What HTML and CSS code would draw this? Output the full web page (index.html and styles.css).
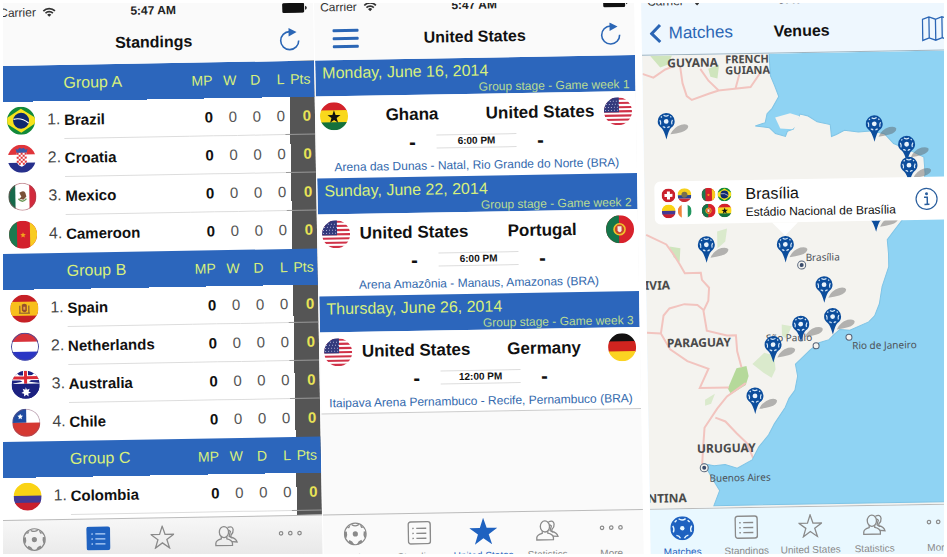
FILE: index.html
```html
<!DOCTYPE html>
<html lang="en">
<head>
    <meta charset="UTF-8">
    <meta name="viewport" content="width=device-width, initial-scale=1.0">
    <title>World Cup 2014</title>
    <link rel="stylesheet" href="styles.css">
</head>
<body>
    <!-- Icons and flags -->
    <svg class="sprite" aria-hidden="true">
        <symbol id="wifi" viewBox="0 0 14 10">
            <path d="M1.2 3.8a8.2 8.2 0 0 1 11.6 0M3.3 6a5.2 5.2 0 0 1 7.4 0" fill="none" stroke="currentColor" stroke-width="1.7"/>
            <path d="M7 9.6L4.9 7.5a3 3 0 0 1 4.2 0z" fill="currentColor"/>
        </symbol>
        <symbol id="battery" viewBox="0 0 25 10">
            <rect width="22" height="10" rx="1.5" fill="currentColor"/>
            <path d="M23 3v4q1.6-.6 1.6-2T23 3z" fill="currentColor"/>
        </symbol>
        <symbol id="refresh" viewBox="0 0 24 24">
            <path d="M12 3.600a9 9 0 1 0 9 9" fill="none" stroke="currentColor" stroke-width="1.6"/>
            <path d="M11 0l8 4.200-8 4.300z" fill="currentColor"/>
        </symbol>
        <symbol id="ball" viewBox="0 0 24 24">
            <circle cx="12" cy="12" r="10.8" fill="none" stroke="currentColor" stroke-width="1.200"/>
            <path d="M8 1.600q4 3.200 8 0l-.5 2q-3.500 1.800-7 0zM1.200 10l2.300-.5q1 3.500-.5 6.500l-1.200-.3zM22.800 10l-2.300-.5q-1 3.500.5 6.500l1.200-.3zM5 20.200l1-2.200q3.200 1 4.500 4.300l-1.500.3zM19 20.200L18 18q-3.200 1-4.500 4.300l1.500.3zM3.500 5.800l2.500.4L7.500 3zM20.500 5.800l-2.500.4L16.500 3z" fill="currentColor"/>
            <circle cx="12" cy="12" r="2.600" fill="currentColor"/>
        </symbol>
        <symbol id="ball-full" viewBox="0 0 24 24">
            <circle cx="12" cy="12" r="12" fill="currentColor"/>
            <g fill="none" stroke="#e9f8ff" stroke-width="1.400">
                <path d="M8.500 2.500q3.500 2.600 7 0M2.500 9.500q2 3 .5 6.500M21.500 9.500q-2 3-.5 6.500M6 19q3 .5 4 3M18 19q-3 .5-4 3M4.500 6l2-2M19.500 6l-2-2"/>
            </g>
            <circle cx="12" cy="12" r="2.200" fill="#e9f8ff"/>
        </symbol>
        <symbol id="list" viewBox="0 0 24 24">
            <rect x="1" y="1" width="22" height="22" rx="2.500" fill="none" stroke="currentColor" stroke-width="1.400"/>
            <path d="M9 7.500h10M9 12.500h10M9 17.500h10M5 7.500h1.500M5 12.500h1.500M5 17.500h1.500" stroke="currentColor" stroke-width="1.400"/>
        </symbol>
        <symbol id="list-full" viewBox="0 0 24 24">
            <rect width="24" height="24" rx="3" fill="currentColor"/>
            <path d="M9 7.500h10M9 12.500h10M9 17.500h10M5 7.500h1.500M5 12.500h1.500M5 17.500h1.500" stroke="#b9d5fa" stroke-width="1.300"/>
        </symbol>
        <symbol id="star" viewBox="0 0 28 28">
            <path d="M14 1l3.200 9.600 10.100.1-8.100 6 3 9.700-8.200-5.900-8.200 5.900 3-9.700-8.100-6 10.100-.1z" fill="none" stroke="currentColor" stroke-width="1.500"/>
        </symbol>
        <symbol id="star-full" viewBox="0 0 28 28">
            <path d="M14 0l3.400 10.200L28 10.300l-8.600 6.300 3.200 10.200L14 20.600l-8.600 6.200 3.200-10.200L0 10.300l10.600-.1z" fill="currentColor"/>
        </symbol>
        <symbol id="people" viewBox="0 0 26 24">
            <g fill="none" stroke="currentColor" stroke-width="1.400">
                <ellipse cx="10.500" cy="7.500" rx="5" ry="6"/>
                <path d="M7.500 12.500v2.300Q2 16 1.500 19.500V22h18v-2.500q-.5-3.500-6-4.700v-2.300"/>
                <path d="M14.500 2.500Q20 .5 20.500 5q.3 3.500-2.500 6v2q5.500 1.500 6.500 5.500l-5.500-.5M15.500 5.500l2 1.500-1.500 5 3 2"/>
            </g>
        </symbol>
        <symbol id="dots" viewBox="0 0 26 24">
            <g fill="none" stroke="currentColor" stroke-width="1.300">
                <circle cx="3" cy="10" r="1.900"/>
                <circle cx="13" cy="10" r="1.900"/>
                <circle cx="23" cy="10" r="1.900"/>
            </g>
        </symbol>
        <symbol id="map-icon" viewBox="0 0 28 26">
            <path d="M1 3.500L7.500 1 14 3.500 20.500 1 27 3.500v21L20.500 22 14 24.500 7.500 22 1 24.500zM7.500 1v21M14 3.500v21M20.500 1v21" fill="none" stroke="currentColor" stroke-width="1.300"/>
        </symbol>
        <symbol id="pin" viewBox="0 0 40 32">
            <path d="M13 22q3-7 11-9.500 6-1 7 1.500 0 4-7 6-5 1.500-11 2z" fill="#555" opacity=".42"/>
            <path d="M9 .5a8.500 8.500 0 0 1 8.500 8.500q0 4-3.700 6.500-2.300 2-4.800 11.500-2.500-9.500-4.800-11.500Q.5 13 .5 9A8.500 8.500 0 0 1 9 .5z" fill="#0c4d9c"/>
            <path d="M6.500 2.800q2.500 1.800 5 0M2.700 7.500q1.300 2 .6 4.500M15.300 7.500q-1.300 2-.6 4.500M5.500 14.500q1.500-.5 2.300 1M12.500 14.500q-1.500-.5-2.300 1M3.800 5l1-1M14.200 5l-1-1" fill="none" stroke="#d6e8f9" stroke-width="1.200"/>
            <circle cx="9" cy="9" r="2.400" fill="#e9f3fc"/>
        </symbol>

        <symbol id="br" viewBox="0 0 28 28">
            <path fill="#12893a" d="M0 0h28v28H0z"/>
            <path fill="#f6e21c" d="M14 2l14 9v6l-14 9L0 17v-6z"/>
            <circle cx="14" cy="14" r="8" fill="#10286e"/>
            <path d="M6.500 12.500q8-2 15 4" fill="none" stroke="#fff" stroke-width="1.200"/>
        </symbol>
        <symbol id="hr" viewBox="0 0 28 28">
            <path fill="#e0343a" d="M0 0h28v10H0z"/>
            <path fill="#fff" d="M0 10h28v8H0z"/>
            <path fill="#27308c" d="M0 18h28v10H0z"/>
            <path fill="#fff" d="M9 8h10v9q-1 4-5 5-4-1-5-5z"/>
            <path fill="#e0343a" d="M9 8h2v2H9zM13 8h2v2h-2zM17 8h2v2h-2zM11 10h2v2h-2zM15 10h2v2h-2zM9 12h2v2H9zM13 12h2v2h-2zM17 12h2v2h-2zM11 14h2v2h-2zM15 14h2v2h-2zM9 16h2v2H9zM13 16h2v2h-2zM17 16h2v2h-2zM11 18h2v2h-2zM15 18h2v2h-2z"/>
            <path fill="#3b5aa8" d="M8 4l2 1 2-2 2 1 2-1 2 2 2-1-1 4H9z"/>
        </symbol>
        <symbol id="mx" viewBox="0 0 28 28">
            <path fill="#fff" d="M0 0h28v28H0z"/>
            <path fill="#17694a" d="M0 0h7v28H0z"/>
            <path fill="#d22a3c" d="M21 0h7v28h-7z"/>
            <path d="M10 16q4 5 8 0" fill="none" stroke="#6e9a5a" stroke-width="1.500"/>
            <path fill="#7a5238" d="M11 10q4-3 6 0l1 4-3 3-4-1 2-2z"/>
            <circle cx="14" cy="14" r="13.500" fill="none" stroke="#a04a55" stroke-opacity=".6"/>
        </symbol>
        <symbol id="cm" viewBox="0 0 28 28">
            <path fill="#d3202c" d="M0 0h28v28H0z"/>
            <path fill="#1b7a50" d="M0 0h8v28H0z"/>
            <path fill="#f8cb22" d="M21 0h7v28h-7z"/>
            <path fill="#f3a21d" d="M14 11.500l.8 1.800 2 .2-1.500 1.400.4 2-1.700-1-1.700 1 .4-2-1.500-1.400 2-.2z"/>
        </symbol>
        <symbol id="es" viewBox="0 0 28 28">
            <path fill="#c62026" d="M0 0h28v28H0z"/>
            <path fill="#f8bf1c" d="M0 7h28v14H0z"/>
            <path d="M9.500 18v-7M18.500 18v-7M8.500 18.500h11" stroke="#8a5b34" stroke-width="1.200"/>
            <path fill="#96502c" d="M11.500 10q2.500-2 5 0v6q-2.500 3-5 0z"/>
            <path fill="#e6a04a" d="M13 12h2v3h-2z"/>
        </symbol>
        <symbol id="nl" viewBox="0 0 28 28">
            <path fill="#fff" d="M0 0h28v28H0z"/>
            <path fill="#d8323a" d="M0 0h28v9H0z"/>
            <path fill="#2a35c4" d="M0 19h28v9H0z"/>
            <circle cx="14" cy="14" r="13.500" fill="none" stroke="#4a4f9e"/>
        </symbol>
        <symbol id="au" viewBox="0 0 28 28">
            <path fill="#1c2180" d="M0 0h28v28H0z"/>
            <path d="M0 0l14 12L28 0M14 12L2 14M14 12l14 2" stroke="#fff" stroke-width="3" fill="none"/>
            <path d="M14 0v13M0 7h28" stroke="#fff" stroke-width="5"/>
            <path d="M14 0v13M0 7h28" stroke="#dc2a36" stroke-width="3"/>
            <path fill="#1c2180" d="M0 13h28v15H0z"/>
            <path fill="#fff" d="M14 16.500l1.200 2.600 2.700-1-1.100 2.700 2.400 1.400-2.700.8.300 2.800-2.300-1.600-2.300 1.600.1-2.800-2.700-.8 2.400-1.400-1.100-2.700 2.700 1z"/>
        </symbol>
        <symbol id="cl" viewBox="0 0 28 28">
            <path fill="#fff" d="M0 0h28v28H0z"/>
            <path fill="#1f4ba0" d="M0 0h14v14H0z"/>
            <path fill="#d53832" d="M0 14h28v14H0z"/>
            <path fill="#fff" d="M8 5l.8 1.800 2 .2-1.500 1.400.4 2-1.700-1-1.700 1 .4-2L5.200 7l2-.2z"/>
            <circle cx="14" cy="14" r="13.500" fill="none" stroke="#8a5a76" stroke-opacity=".5"/>
        </symbol>
        <symbol id="co" viewBox="0 0 28 28">
            <path fill="#fad314" d="M0 0h28v14H0z"/>
            <path fill="#433a94" d="M0 13h28v8H0z"/>
            <path fill="#c8202e" d="M0 20h28v8H0z"/>
        </symbol>
        <symbol id="gh" viewBox="0 0 28 28">
            <path fill="#d3222a" d="M0 0h28v9H0z"/>
            <path fill="#f9d81c" d="M0 8h28v13H0z"/>
            <path fill="#14713c" d="M0 20h28v8H0z"/>
            <path fill="#111" d="M14 8l1.600 4.700 4.900.1-3.900 3 1.400 4.700-4-2.800-4 2.800 1.400-4.700-3.900-3 4.900-.1z"/>
        </symbol>
        <symbol id="us" viewBox="0 0 28 28">
            <path fill="#fff" d="M0 0h28v28H0z"/>
            <path d="M0 1.500h28M0 5.700h28M0 9.900h28M0 14.100h28M0 18.300h28M0 22.500h28M0 26.700h28" stroke="#d03248" stroke-width="2.100"/>
            <path fill="#33397c" d="M0 0h15v15H0z"/>
            <path d="M3 4h12M2 7h13M1 10h14M1 13h14" stroke="#aeb2d6" stroke-dasharray="1 2"/>
        </symbol>
        <symbol id="pt" viewBox="0 0 28 28">
            <path fill="#d8222c" d="M0 0h28v28H0z"/>
            <path fill="#15754a" d="M0 0h13v28H0z"/>
            <circle cx="13.500" cy="14" r="5.500" fill="#c9452c" stroke="#f2c32a" stroke-width="1.600"/>
            <path fill="#f7e9e4" d="M11.500 11h4v4.500q-2 3-4 0z"/>
        </symbol>
        <symbol id="de" viewBox="0 0 28 28">
            <path fill="#131111" d="M0 0h28v9H0z"/>
            <path fill="#d0241f" d="M0 8h28v11H0z"/>
            <path fill="#fbd322" d="M0 18h28v10H0z"/>
        </symbol>
        <symbol id="ch" viewBox="0 0 28 28">
            <path fill="#c9202c" d="M0 0h28v28H0z"/>
            <path fill="#fff" d="M11 6h6v5h5v6h-5v5h-6v-5H6v-6h5z"/>
        </symbol>
        <symbol id="ec" viewBox="0 0 28 28">
            <path fill="#f5d01c" d="M0 0h28v14H0z"/>
            <path fill="#2b4590" d="M0 14h28v7H0z"/>
            <path fill="#c92c35" d="M0 21h28v7H0z"/>
            <circle cx="14" cy="13" r="6" fill="#77704f"/>
        </symbol>
        <symbol id="ci" viewBox="0 0 28 28">
            <path fill="#fff" d="M0 0h28v28H0z"/>
            <path fill="#f0843a" d="M0 0h8v28H0z"/>
            <path fill="#22965f" d="M20 0h8v28h-8z"/>
        </symbol>
    </svg>

    <main class="frame">
        <div class="screens">

            <!-- Standings -->
            <section class="screen">
                <div class="status">
                    <span class="carrier">Carrier <svg class="wifi"><use href="#wifi"/></svg></span>
                    <span class="time">5:47 AM</span>
                    <svg class="battery"><use href="#battery"/></svg>
                </div>
                <header class="topbar">
                    <span></span>
                    <h1>Standings</h1>
                    <button class="icon-btn" type="button" aria-label="Refresh"><svg class="icon"><use href="#refresh"/></svg></button>
                </header>
                <div class="content standings">
                    <table class="group">
                        <colgroup><col class="col-rank"><col><col class="col-num"><col class="col-num"><col class="col-num"><col class="col-num"><col class="col-pts"></colgroup>
                        <thead>
                            <tr><th class="group-name" colspan="2">Group A</th><th>MP</th><th>W</th><th>D</th><th>L</th><th class="pts">Pts</th></tr>
                        </thead>
                        <tbody>
                            <tr><td class="rank"><svg class="flag"><use href="#br"/></svg>1.</td><td class="team">Brazil</td><td class="played">0</td><td>0</td><td>0</td><td>0</td><td class="pts">0</td></tr>
                            <tr><td class="rank"><svg class="flag"><use href="#hr"/></svg>2.</td><td class="team">Croatia</td><td class="played">0</td><td>0</td><td>0</td><td>0</td><td class="pts">0</td></tr>
                            <tr><td class="rank"><svg class="flag"><use href="#mx"/></svg>3.</td><td class="team">Mexico</td><td class="played">0</td><td>0</td><td>0</td><td>0</td><td class="pts">0</td></tr>
                            <tr><td class="rank"><svg class="flag"><use href="#cm"/></svg>4.</td><td class="team">Cameroon</td><td class="played">0</td><td>0</td><td>0</td><td>0</td><td class="pts">0</td></tr>
                        </tbody>
                    </table>
                    <table class="group">
                        <colgroup><col class="col-rank"><col><col class="col-num"><col class="col-num"><col class="col-num"><col class="col-num"><col class="col-pts"></colgroup>
                        <thead>
                            <tr><th class="group-name" colspan="2">Group B</th><th>MP</th><th>W</th><th>D</th><th>L</th><th class="pts">Pts</th></tr>
                        </thead>
                        <tbody>
                            <tr><td class="rank"><svg class="flag"><use href="#es"/></svg>1.</td><td class="team">Spain</td><td class="played">0</td><td>0</td><td>0</td><td>0</td><td class="pts">0</td></tr>
                            <tr><td class="rank"><svg class="flag"><use href="#nl"/></svg>2.</td><td class="team">Netherlands</td><td class="played">0</td><td>0</td><td>0</td><td>0</td><td class="pts">0</td></tr>
                            <tr><td class="rank"><svg class="flag"><use href="#au"/></svg>3.</td><td class="team">Australia</td><td class="played">0</td><td>0</td><td>0</td><td>0</td><td class="pts">0</td></tr>
                            <tr><td class="rank"><svg class="flag"><use href="#cl"/></svg>4.</td><td class="team">Chile</td><td class="played">0</td><td>0</td><td>0</td><td>0</td><td class="pts">0</td></tr>
                        </tbody>
                    </table>
                    <table class="group partial">
                        <colgroup><col class="col-rank"><col><col class="col-num"><col class="col-num"><col class="col-num"><col class="col-num"><col class="col-pts"></colgroup>
                        <thead>
                            <tr><th class="group-name" colspan="2">Group C</th><th>MP</th><th>W</th><th>D</th><th>L</th><th class="pts">Pts</th></tr>
                        </thead>
                        <tbody>
                            <tr><td class="rank"><svg class="flag"><use href="#co"/></svg>1.</td><td class="team">Colombia</td><td class="played">0</td><td>0</td><td>0</td><td>0</td><td class="pts">0</td></tr>
                        </tbody>
                    </table>
                </div>
                <nav class="tabs tabs-gray">
                    <a href="#"><svg class="icon"><use href="#ball"/></svg>Matches</a>
                    <a href="#" class="active"><svg class="icon"><use href="#list-full"/></svg>Standings</a>
                    <a href="#"><svg class="icon"><use href="#star"/></svg>United States</a>
                    <a href="#"><svg class="icon"><use href="#people"/></svg>Statistics</a>
                    <a href="#"><svg class="icon"><use href="#dots"/></svg>More</a>
                </nav>
            </section>

            <!-- Matches of one team -->
            <section class="screen">
                <div class="status">
                    <span class="carrier">Carrier <svg class="wifi"><use href="#wifi"/></svg></span>
                    <span class="time">5:47 AM</span>
                    <svg class="battery"><use href="#battery"/></svg>
                </div>
                <header class="topbar">
                    <button class="icon-btn menu-btn" type="button" aria-label="Menu"><i></i><i></i><i></i></button>
                    <h1>United States</h1>
                    <button class="icon-btn" type="button" aria-label="Refresh"><svg class="icon"><use href="#refresh"/></svg></button>
                </header>
                <div class="content matches">
                    <div class="day"><h2>Monday, June 16, 2014</h2><p>Group stage - Game week 1</p></div>
                    <article class="match">
                        <div class="teams"><svg class="flag"><use href="#gh"/></svg><b>Ghana</b><b>United States</b><svg class="flag"><use href="#us"/></svg></div>
                        <div class="score"><b>-</b><time>6:00 PM</time><b>-</b></div>
                        <a class="venue" href="#">Arena das Dunas - Natal, Rio Grande do Norte (BRA)</a>
                    </article>
                    <div class="day"><h2>Sunday, June 22, 2014</h2><p>Group stage - Game week 2</p></div>
                    <article class="match">
                        <div class="teams"><svg class="flag"><use href="#us"/></svg><b>United States</b><b>Portugal</b><svg class="flag"><use href="#pt"/></svg></div>
                        <div class="score"><b>-</b><time>6:00 PM</time><b>-</b></div>
                        <a class="venue" href="#">Arena Amazônia - Manaus, Amazonas (BRA)</a>
                    </article>
                    <div class="day"><h2>Thursday, June 26, 2014</h2><p>Group stage - Game week 3</p></div>
                    <article class="match last">
                        <div class="teams"><svg class="flag"><use href="#us"/></svg><b>United States</b><b>Germany</b><svg class="flag"><use href="#de"/></svg></div>
                        <div class="score"><b>-</b><time>12:00 PM</time><b>-</b></div>
                        <a class="venue" href="#">Itaipava Arena Pernambuco - Recife, Pernambuco (BRA)</a>
                    </article>
                </div>
                <nav class="tabs">
                    <a href="#"><svg class="icon"><use href="#ball"/></svg>Matches</a>
                    <a href="#"><svg class="icon"><use href="#list"/></svg>Standings</a>
                    <a href="#" class="active"><svg class="icon icon-big"><use href="#star-full"/></svg>United States</a>
                    <a href="#"><svg class="icon"><use href="#people"/></svg>Statistics</a>
                    <a href="#"><svg class="icon"><use href="#dots"/></svg>More</a>
                </nav>
            </section>

            <!-- Venues map -->
            <section class="screen screen-map">
                <div class="status">
                    <span class="carrier">Carrier <svg class="wifi"><use href="#wifi"/></svg></span>
                    <span class="time">5:47 AM</span>
                    <svg class="battery"><use href="#battery"/></svg>
                </div>
                <header class="topbar">
                    <a class="back" href="#"><svg class="chevron" viewBox="0 0 12 20"><path d="M10.500 1.500L2 10l8.500 8.500" fill="none" stroke="currentColor" stroke-width="3"/></svg>Matches</a>
                    <h1>Venues</h1>
                    <button class="icon-btn map-btn" type="button" aria-label="Map"><svg class="icon-map"><use href="#map-icon"/></svg></button>
                </header>
                <div class="content map">
                    <svg class="map-art" viewBox="0 0 320 454" preserveAspectRatio="xMinYMin slice">
                        <path fill="#f4f3ef" d="M0 0h320v454H0z"/>
                        <g fill="#cfe5bd">
                            <path d="M8 0h22l-4 9-8 3zM66 14l11-4-2 14-7-2zM24 191l11 2-1 14-6-5z"/>
                            <path d="M89 314l10-2 2 10-3 9-15 9-3-6z" fill="#b5d99a"/>
                            <path d="M105 310l12-11 10 3 1 14-4 8-8-5zM135 271l10 2-6 12-4-3zM72 177l10-3-2 13-8 7zM57 345l10-6-4 10-6 2z" opacity=".7"/>
                        </g>
                        <g fill="none" stroke="#f2c4bf" stroke-width="2">
                            <path d="M0 18l11 4 12-8 8-3M38 12l2 16 4 13 5 4 17-6 10-3M58 14l8 12 10 10 32-3 10-14M97 20l-4 14"/>
                            <path d="M1 179l20 10 7 10 6 10 5 9h16l1 7 7 8-1 13-5 10 3 20 20 5h9l1 16 4 16M58 256l-7-6-13-1-15 4-6 7-3 18M0 277l14 1 9 16 17 12 21 8-9 19h29"/>
                            <path d="M98 329l-19 13-10 12-13 19-2 23-1 14M67 363l10 4 11 12 10 10 6 15"/>
                        </g>
                        <path fill="#8fd3f3" stroke="#7fc4e6" d="M127-1l1 23 4 10 4 11-7 12-5 5-2 9-10 3 14 2 6 6 10 3 2-5 6-2 4-9 3-6 8 2 9 6 13 3 1 12 5-2 8-4 14 2 12-1 14 3 9 10 20 9 10 5 1 17-5 23-8 12-11 11-8 10-7 9 1 14v13l-7 20-3 17-5 12-6 6-19 8-10-1-6 5-5 5-10 3-9 7-15 14 2 12-3 14-6 8-4 9-11 16-6 11-10 12-7 13-15 8-12-4-11 1-10-2 8 15 7 12-6 15h258V-1z"/>
                        <path fill="#f4f3ef" d="M132 64l15-4 9 3-1 8-6 5-12-1z"/>
                        <g class="map-country">
                            <text x="25" y="12">GUYANA</text>
                            <text x="83" y="9" class="small">FRENCH</text>
                            <text x="83" y="20" class="small">GUIANA</text>
                            <text x="24" y="234" text-anchor="end">BOLIVIA</text>
                            <text x="20" y="292">PARAGUAY</text>
                            <text x="48" y="398">URUGUAY</text>
                            <text x="37" y="447" text-anchor="end">ARGENTINA</text>
                        </g>
                        <g class="map-city">
                            <text x="160" y="208">Brasília</text>
                            <text x="119" y="288">São Paulo</text>
                            <text x="205" y="297">Rio de Janeiro</text>
                            <text x="60" y="427">Buenos Aires</text>
                        </g>
                        <g fill="#f4f3ef" stroke="#56647a">
                            <circle cx="156" cy="212" r="4"/>
                            <circle cx="169" cy="293" r="3"/>
                            <circle cx="202" cy="285" r="3"/>
                            <circle cx="55" cy="413" r="4"/>
                        </g>
                        <g fill="#3a4c6c">
                            <circle cx="156" cy="212" r="2"/>
                            <circle cx="55" cy="413" r="2"/>
                        </g>
                        <g>
                            <use href="#pin" x="14" y="57" width="40" height="32"/>
                            <use href="#pin" x="222" y="63" width="40" height="32"/>
                            <use href="#pin" x="254" y="84" width="40" height="32"/>
                            <use href="#pin" x="256" y="105" width="40" height="32"/>
                            <use href="#pin" x="222" y="153" width="40" height="32"/>
                            <use href="#pin" x="52" y="181" width="40" height="32"/>
                            <use href="#pin" x="131" y="182" width="40" height="32"/>
                            <use href="#pin" x="169" y="223" width="40" height="32"/>
                            <use href="#pin" x="177" y="255" width="40" height="32"/>
                            <use href="#pin" x="145" y="262" width="40" height="32"/>
                            <use href="#pin" x="117" y="282" width="40" height="32"/>
                            <use href="#pin" x="98" y="333" width="40" height="32"/>
                        </g>
                    </svg>
                    <div class="callout">
                        <div class="mini-flags">
                            <svg class="flag"><use href="#ch"/></svg><svg class="flag"><use href="#ec"/></svg>
                            <svg class="flag"><use href="#co"/></svg><svg class="flag"><use href="#ci"/></svg>
                        </div>
                        <div class="mini-flags">
                            <svg class="flag"><use href="#cm"/></svg><svg class="flag"><use href="#br"/></svg>
                            <svg class="flag"><use href="#pt"/></svg><svg class="flag"><use href="#gh"/></svg>
                        </div>
                        <div class="callout-text">
                            <h2>Brasília</h2>
                            <p>Estádio Nacional de Brasília</p>
                        </div>
                        <button class="info" type="button" aria-label="More info">
                            <svg viewBox="0 0 24 24"><circle cx="12" cy="12" r="10.500" fill="none" stroke="currentColor" stroke-width="1.200"/><circle cx="12" cy="6.800" r="1.500" fill="currentColor"/><path d="M9.500 10.300h3.200v7M9.800 17.500h5" fill="none" stroke="currentColor" stroke-width="1.500"/></svg>
                        </button>
                    </div>
                </div>
                <nav class="tabs tabs-blue">
                    <a href="#" class="active"><svg class="icon"><use href="#ball-full"/></svg>Matches</a>
                    <a href="#"><svg class="icon"><use href="#list"/></svg>Standings</a>
                    <a href="#"><svg class="icon"><use href="#star"/></svg>United States</a>
                    <a href="#"><svg class="icon"><use href="#people"/></svg>Statistics</a>
                    <a href="#"><svg class="icon"><use href="#dots"/></svg>More</a>
                </nav>
            </section>

        </div>
    </main>
</body>
</html>
```
FILE: styles.css
```css
* {
    margin: 0;
    padding: 0;
    box-sizing: border-box;
}

body {
    height: 100vh;
    padding: 3px;
    background-color: #fff;
    color: #111;
    font-family: "Liberation Sans", Arial, sans-serif;
    overflow: hidden;
}

a {
    color: inherit;
    text-decoration: none;
}

button {
    border: none;
    background: none;
    color: inherit;
    cursor: pointer;
}

.sprite {
    position: absolute;
    width: 0;
    height: 0;
}

.frame {
    height: 100%;
    overflow: hidden;
}

/* The three screens lie side by side, slightly tilted */
.screens {
    display: flex;
    gap: 1px;
    height: calc(100% + 17px);
    margin: 0 -17px 0 -10px;
    transform: rotate(-1deg);
    transform-origin: 10px 0;
}

.screen {
    flex: 1;
    min-width: 0;
    display: flex;
    flex-direction: column;
    background-color: #fafafa;
    overflow: hidden;
}

.screen-map {
    margin-left: 6px;
    background-color: #eef7fe;
}

/* Status and title bars */
.status {
    display: grid;
    grid-template-columns: 1fr auto 1fr;
    align-items: center;
    height: 20px;
    padding: 0 6px;
    font-size: 12px;
}

.carrier {
    display: flex;
    align-items: center;
    gap: 6px;
    color: #333;
}

.wifi {
    width: 14px;
    height: 10px;
}

.time {
    font-weight: bold;
    color: #222;
}

.battery {
    width: 25px;
    height: 10px;
    justify-self: end;
}

.topbar {
    display: grid;
    grid-template-columns: 1fr auto 1fr;
    align-items: center;
    height: 43px;
    padding: 0 12px;
    color: #2b66b5;
}

.topbar h1 {
    font-size: 16px;
    color: #111;
}

.icon {
    display: block;
    width: 24px;
    height: 24px;
}

.icon-big {
    width: 28px;
    height: 28px;
}

.icon-btn {
    justify-self: end;
}

.menu-btn {
    justify-self: start;
    display: flex;
    flex-direction: column;
    gap: 5px;
    width: 32px;
    padding-left: 6px;
}

.menu-btn i {
    height: 3px;
    border-radius: 1px;
    background-color: #2b66b5;
}

.back {
    display: flex;
    align-items: center;
    gap: 7px;
    font-size: 17px;
    margin-left: -4px;
}

.chevron {
    width: 12px;
    height: 20px;
}

.icon-map {
    display: block;
    width: 28px;
    height: 26px;
}

.content {
    flex: 1;
    min-height: 0;
    overflow: hidden;
}

/* Standings */
.standings {
    background: linear-gradient(to left, #555 25px, #fff 25px);
}

.group {
    width: 100%;
    border-spacing: 0;
    table-layout: fixed;
    /* one band behind the whole header row */
    background: linear-gradient(#2c66bc 36px, transparent 36px);
}

.col-rank {
    width: 69px;
}

.col-num {
    width: 24px;
}

.col-pts {
    width: 30px;
}

.group th {
    height: 36px;
    color: #d8f07c;
    font-size: 14px;
    font-weight: normal;
    text-align: right;
}

.group .group-name {
    padding-left: 69px;
    font-size: 16px;
    text-align: left;
}

.group td {
    height: 38px;
    border-bottom: 1px solid #ddd;
    color: #555;
    font-size: 15px;
    text-align: right;
}

.group td.rank {
    padding-left: 12px;
    border-bottom-color: transparent;
    font-size: 16px;
    text-align: left;
    white-space: nowrap;
    color: #444;
}

.group td.team {
    font-weight: bold;
    text-align: left;
    color: #111;
}

.group td.played {
    font-weight: bold;
    color: #111;
}

.group .pts {
    padding-right: 4px;
}

.group td.pts {
    border-bottom-color: #999;
    color: #e8e356;
    font-weight: bold;
}

.group:not(.partial) tr:last-child td {
    border-bottom-color: transparent;
}

.flag {
    width: 28px;
    height: 28px;
    border-radius: 50%;
    overflow: hidden;
}

.rank .flag {
    margin-right: 12px;
    vertical-align: middle;
}

/* Matches */
.day {
    height: 36px;
    padding: 3px 6px 0 7px;
    background-color: #2c66bc;
    color: #d8f07c;
}

.day h2 {
    font-size: 16px;
    font-weight: normal;
    line-height: 20px;
}

.day p {
    font-size: 12px;
    line-height: 13px;
    text-align: right;
    color: #b9dc93;
}

.match {
    height: 82px;
    background-color: #fff;
    text-align: center;
}

.match.last {
    border-bottom: 1px solid #ccc;
}

.teams {
    display: grid;
    grid-template-columns: 28px 1fr 1fr 28px;
    align-items: center;
    height: 40px;
    padding: 0 4px;
    font-size: 17px;
    white-space: nowrap;
}

.score {
    display: grid;
    grid-template-columns: 1fr 80px 1fr;
    align-items: center;
    padding: 0 72px;
    line-height: 14px;
}

.score b {
    font-size: 20px;
}

.score time {
    border-top: 1px solid #ddd;
    border-bottom: 1px solid #ddd;
    font-size: 10px;
    font-weight: bold;
    line-height: 12px;
}

.venue {
    display: block;
    padding-top: 10px;
    font-size: 12px;
    line-height: 14px;
    color: #3369ad;
    white-space: nowrap;
}

/* Map */
.map {
    position: relative;
    border-top: 1px solid #9fb4c0;
}

.map-art {
    display: block;
    width: 100%;
    height: 100%;
}

.map-country {
    font: bold 12px "Noto Sans", sans-serif;
    fill: #4a4a4a;
}

.map-country .small {
    font-size: 11px;
}

.map-city {
    font: 10px "Noto Sans", sans-serif;
    fill: #4c5258;
}

.callout {
    position: absolute;
    top: 126px;
    left: 10px;
    right: 10px;
    display: flex;
    align-items: center;
    height: 43px;
    padding: 0 16px 0 7px;
    border-radius: 6px;
    background-color: #fff;
}

.callout::after {
    content: "";
    position: absolute;
    top: 100%;
    left: 117px;
    border: 13px solid transparent;
    border-top-color: #fff;
    border-bottom: none;
}

.mini-flags {
    display: grid;
    grid-template-columns: 14px 14px;
    gap: 2px;
    margin-right: 10px;
}

.mini-flags .flag {
    width: 14px;
    height: 14px;
}

.callout-text {
    flex: 1;
    padding-left: 4px;
    white-space: nowrap;
}

.callout-text h2 {
    font-size: 16px;
    font-weight: normal;
    line-height: 20px;
}

.callout-text p {
    font-size: 12px;
    line-height: 16px;
}

.info {
    width: 24px;
    height: 24px;
    color: #2b5f9e;
}

/* Tab bar */
.tabs {
    display: flex;
    height: 51px;
    border-top: 1px solid #bbb;
    color: #8a8a8a;
    font-size: 10px;
}

.tabs a {
    flex: 1;
    min-width: 0;
    display: grid;
    grid-template-rows: 36px 12px;
    justify-items: center;
    align-items: center;
    align-content: start;
    padding-top: 1px;
    line-height: 12px;
    white-space: nowrap;
}

.tabs .active {
    color: #1f62c0;
}

.tabs-gray {
    background: linear-gradient(to bottom, #f7f7f7, #e4e4e4);
}

.tabs-blue {
    background-color: #e9f8ff;
}
```
